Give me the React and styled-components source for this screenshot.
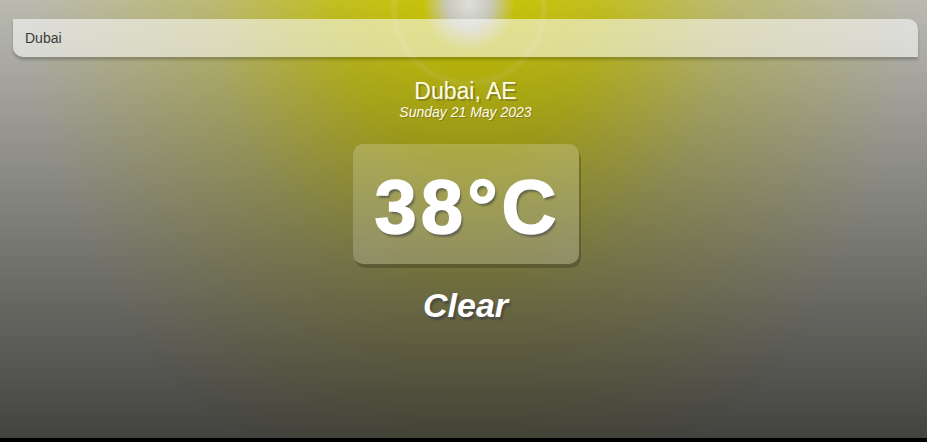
import React from 'react';
import styled, { createGlobalStyle } from 'styled-components';

const GlobalStyle = createGlobalStyle`
  * { box-sizing: border-box; }
  body {
    margin: 0;
    background: #000;
    font-family: "Liberation Sans", Arial, sans-serif;
  }
`;

const App = () => {
  const weather = {
    city: 'Dubai',
    country: 'AE',
    date: 'Sunday 21 May 2023',
    temp: 38,
    main: 'Clear',
  };

  return (
    <>
      <GlobalStyle />
      <Screen>
        <Main>
          <SearchBox>
            <SearchBar type="text" placeholder="Search..." defaultValue={weather.city} />
          </SearchBox>
          <LocationBox>
            <Location>{weather.city}, {weather.country}</Location>
            <DateText>{weather.date}</DateText>
          </LocationBox>
          <WeatherBox>
            <Temp>{weather.temp}°C</Temp>
            <Condition>{weather.main}</Condition>
          </WeatherBox>
        </Main>
      </Screen>
    </>
  );
};

const Screen = styled.div`
  height: 438px;
  background-color: #cfcfc5;
  background-image:
    linear-gradient(to bottom, rgba(0, 0, 0, 0.1), rgba(0, 0, 0, 0.68)),
    radial-gradient(circle at 469px 6px, rgba(250, 250, 245, 1) 0, rgba(225, 225, 220, 0.95) 22px, rgba(225, 225, 200, 0) 46px),
    radial-gradient(circle at 469px 8px, rgba(255, 255, 200, 0) 70px, rgba(255, 255, 200, 0.16) 75px, rgba(255, 255, 200, 0) 80px),
    radial-gradient(ellipse 440px 520px at 469px 0, #e0dc00 0%, #d8d424 30%, rgba(210, 207, 110, 0.8) 58%, rgba(207, 207, 197, 0) 100%);
`;

const Main = styled.main`
  display: flex;
  flex-direction: column;
  padding: 19px 9px 0 13px;
`;

const SearchBox = styled.div`
  width: 100%;
`;

const SearchBar = styled.input`
  display: block;
  width: 100%;
  height: 38px;
  padding: 0 12px;
  border: none;
  outline: none;
  appearance: none;
  background-color: rgba(255, 255, 255, 0.55);
  border-radius: 0 10px 0 10px;
  box-shadow: 0 3px 3px rgba(0, 0, 0, 0.2);
  color: #3a3a3a;
  font-family: "Liberation Sans", Arial, sans-serif;
  font-size: 14px;
`;

const LocationBox = styled.div`
  display: flex;
  flex-direction: column;
  align-items: center;
  margin-top: 22px;
`;

const Location = styled.div`
  color: #fffbe6;
  font-size: 23px;
  line-height: 25px;
  text-shadow: 2px 2px rgba(50, 50, 70, 0.3);
`;

const DateText = styled.div`
  color: #fffbe6;
  font-size: 14px;
  line-height: 16px;
  font-style: italic;
  text-shadow: 1px 1px rgba(50, 50, 70, 0.3);
`;

const WeatherBox = styled.div`
  display: flex;
  flex-direction: column;
  align-items: center;
  margin-top: 24px;
`;

const Temp = styled.div`
  width: 226px;
  height: 120px;
  display: flex;
  align-items: center;
  justify-content: center;
  padding-top: 4px;
  padding-left: 4px;
  background-color: rgba(255, 255, 255, 0.2);
  border-radius: 10px;
  box-shadow: 2px 4px rgba(0, 0, 0, 0.2);
  color: #fff;
  font-size: 76px;
  font-weight: 900;
  letter-spacing: 4px;
  -webkit-text-stroke: 1.5px #fff;
  text-shadow: 2px 3px 2px rgba(50, 50, 70, 0.5);
`;

const Condition = styled.div`
  margin-top: 22px;
  color: #fff;
  font-size: 34px;
  font-weight: 700;
  font-style: italic;
  text-shadow: 2px 3px 2px rgba(50, 50, 70, 0.5);
`;

export default App;
